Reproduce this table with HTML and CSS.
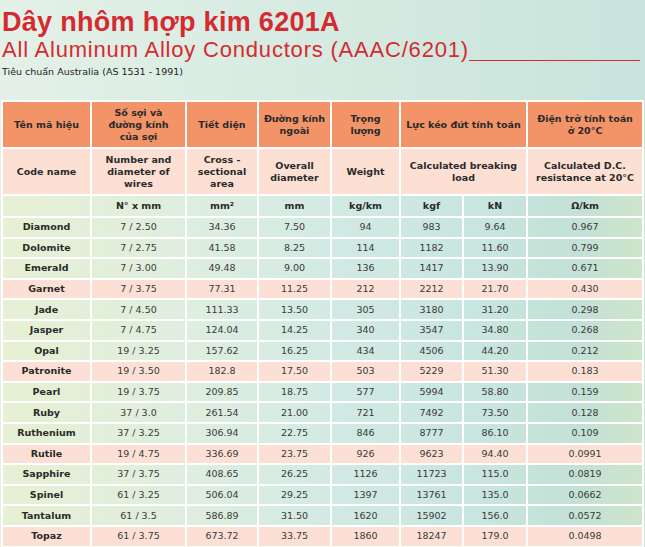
FILE: index.html
```html
<!DOCTYPE html>
<html lang="vi">
<head>
<meta charset="utf-8">
<title>Dây nhôm hợp kim 6201A</title>
<link rel="stylesheet" href="styles.css">
</head>
<body>
<div class="page">
  <header class="head">
    <h1 class="title">Dây nhôm hợp kim 6201A</h1>
    <div class="subtitle"><span>All Aluminum Alloy Conductors (AAAC/6201)</span><span class="rule"></span></div>
    <div class="std">Tiêu chuẩn Australia (AS 1531 - 1991)</div>
  </header>
  <table class="spec">
    <colgroup>
      <col class="c1"><col class="c2"><col class="c3"><col class="c4"><col class="c5"><col class="c6"><col class="c7"><col class="c8">
    </colgroup>
    <thead>
      <tr class="h1">
        <th>Tên mã hiệu</th>
        <th>Số sợi và<br>đường kính<br>của sợi</th>
        <th>Tiết diện</th>
        <th>Đường kính<br>ngoài</th>
        <th>Trọng<br>lượng</th>
        <th colspan="2">Lực kéo đứt tính toán</th>
        <th>Điện trở tính toán<br>ở 20°C</th>
      </tr>
      <tr class="h2">
        <th>Code name</th>
        <th>Number and<br>diameter of<br>wires</th>
        <th>Cross -<br>sectional<br>area</th>
        <th>Overall<br>diameter</th>
        <th>Weight</th>
        <th colspan="2">Calculated breaking<br>load</th>
        <th>Calculated D.C.<br>resistance at 20°C</th>
      </tr>
      <tr class="h3">
        <th></th>
        <th>N° x mm</th>
        <th>mm²</th>
        <th>mm</th>
        <th>kg/km</th>
        <th>kgf</th>
        <th>kN</th>
        <th>Ω/km</th>
      </tr>
    </thead>
    <tbody>
      <tr><th>Diamond</th><td>7 / 2.50</td><td>34.36</td><td>7.50</td><td>94</td><td>983</td><td>9.64</td><td>0.967</td></tr>
      <tr><th>Dolomite</th><td>7 / 2.75</td><td>41.58</td><td>8.25</td><td>114</td><td>1182</td><td>11.60</td><td>0.799</td></tr>
      <tr><th>Emerald</th><td>7 / 3.00</td><td>49.48</td><td>9.00</td><td>136</td><td>1417</td><td>13.90</td><td>0.671</td></tr>
      <tr class="pink"><th>Garnet</th><td>7 / 3.75</td><td>77.31</td><td>11.25</td><td>212</td><td>2212</td><td>21.70</td><td>0.430</td></tr>
      <tr><th>Jade</th><td>7 / 4.50</td><td>111.33</td><td>13.50</td><td>305</td><td>3180</td><td>31.20</td><td>0.298</td></tr>
      <tr><th>Jasper</th><td>7 / 4.75</td><td>124.04</td><td>14.25</td><td>340</td><td>3547</td><td>34.80</td><td>0.268</td></tr>
      <tr><th>Opal</th><td>19 / 3.25</td><td>157.62</td><td>16.25</td><td>434</td><td>4506</td><td>44.20</td><td>0.212</td></tr>
      <tr class="pink"><th>Patronite</th><td>19 / 3.50</td><td>182.8</td><td>17.50</td><td>503</td><td>5229</td><td>51.30</td><td>0.183</td></tr>
      <tr><th>Pearl</th><td>19 / 3.75</td><td>209.85</td><td>18.75</td><td>577</td><td>5994</td><td>58.80</td><td>0.159</td></tr>
      <tr><th>Ruby</th><td>37 / 3.0</td><td>261.54</td><td>21.00</td><td>721</td><td>7492</td><td>73.50</td><td>0.128</td></tr>
      <tr><th>Ruthenium</th><td>37 / 3.25</td><td>306.94</td><td>22.75</td><td>846</td><td>8777</td><td>86.10</td><td>0.109</td></tr>
      <tr class="pink"><th>Rutile</th><td>19 / 4.75</td><td>336.69</td><td>23.75</td><td>926</td><td>9623</td><td>94.40</td><td>0.0991</td></tr>
      <tr><th>Sapphire</th><td>37 / 3.75</td><td>408.65</td><td>26.25</td><td>1126</td><td>11723</td><td>115.0</td><td>0.0819</td></tr>
      <tr><th>Spinel</th><td>61 / 3.25</td><td>506.04</td><td>29.25</td><td>1397</td><td>13761</td><td>135.0</td><td>0.0662</td></tr>
      <tr><th>Tantalum</th><td>61 / 3.5</td><td>586.89</td><td>31.50</td><td>1620</td><td>15902</td><td>156.0</td><td>0.0572</td></tr>
      <tr class="pink"><th>Topaz</th><td>61 / 3.75</td><td>673.72</td><td>33.75</td><td>1860</td><td>18247</td><td>179.0</td><td>0.0498</td></tr>
    </tbody>
  </table>
</div>
</body>
</html>
```

FILE: styles.css
```css
html, body {
  margin: 0;
  padding: 0;
}
body {
  width: 645px;
  height: 547px;
  overflow: hidden;
  background: linear-gradient(90deg, #e4f1e8 0%, #d7ebe2 45%, #c8e4dc 100%);
  font-family: "DejaVu Sans", "Liberation Sans", sans-serif;
  color: #2b2b2b;
}
.page {
  display: flex;
  flex-direction: column;
}
.head {
  padding: 7px 0 0 2px;
  height: 100px;
  box-sizing: border-box;
}
.title {
  margin: 0;
  font-family: "Liberation Sans", Arial, sans-serif;
  font-weight: bold;
  font-size: 27px;
  line-height: 30px;
  color: #d52a30;
  letter-spacing: 0.3px;
}
.subtitle {
  display: flex;
  align-items: flex-end;
  font-family: "Liberation Sans", Arial, sans-serif;
  font-size: 22px;
  line-height: 24px;
  letter-spacing: 0.8px;
  color: #d52a30;
  margin-top: 1px;
}
.subtitle .rule {
  flex: 1;
  border-bottom: 1px solid #d52a30;
  margin-right: 5px;
  margin-bottom: 1px;
}
.std {
  font-family: "DejaVu Sans", sans-serif;
  font-size: 9.5px;
  line-height: 14px;
  color: #222;
  margin-top: 3px;
}
.spec {
  margin-left: 1px;
  width: 641px;
  table-layout: fixed;
  border-collapse: collapse;
  background: linear-gradient(90deg, #e6f0d3 0%, #deeedf 30%, #d3eae4 50%, #c8e5df 75%, #c3e1d6 90%, #cde5c9 100%);
  font-size: 9.5px;
}
.c1 { width: 89px; }
.c2 { width: 95px; }
.c3 { width: 72px; }
.c4 { width: 73px; }
.c5 { width: 69px; }
.c6 { width: 63px; }
.c7 { width: 64px; }
.c8 { width: 116px; }
.spec th, .spec td {
  border: 2px solid #fff;
  padding: 0;
  text-align: center;
  vertical-align: middle;
  line-height: 12px;
}
.spec thead th {
  font-weight: 600;
  font-size: 9.5px;
  color: #2a2a2a;
}
.h1 th {
  background: #f39468;
  height: 45px;
}
.h2 th {
  background: #fde0d4;
  height: 45px;
}
.h3 th {
  height: 20px;
}
.spec tbody tr {
  height: 20.6px;
}
.spec tbody th {
  font-weight: bold;
  font-size: 9.5px;
  color: #2a2a2a;
}
.spec tbody td {
  font-size: 9.5px;
  color: #3a3a3a;
}
.spec tbody tr.pink {
  background: #fde0d5;
}
```
